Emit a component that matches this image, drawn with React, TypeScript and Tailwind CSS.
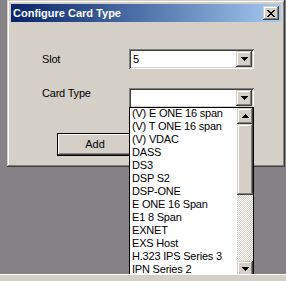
import React from 'react';

const raised =
  'shadow-[inset_-1px_-1px_0_#404040,inset_1px_1px_0_#d4d0c8,inset_-2px_-2px_0_#808080,inset_2px_2px_0_#ffffff]';
const sunken =
  'shadow-[inset_1px_1px_0_#808080,inset_-1px_-1px_0_#ffffff,inset_2px_2px_0_#404040,inset_-2px_-2px_0_#d4d0c8]';

const items = [
  '(V) E ONE 16 span',
  '(V) T ONE 16 span',
  '(V) VDAC',
  'DASS',
  'DS3',
  'DSP S2',
  'DSP-ONE',
  'E ONE 16 Span',
  'E1 8 Span',
  'EXNET',
  'EXS Host',
  'H.323 IPS Series 3',
  'IPN Series 2',
];

const Arrow = ({ up = false }: { up?: boolean }) => (
  <svg width="7" height="4" viewBox="0 0 7 4" shapeRendering="crispEdges">
    <path d={up ? 'M3 0h1v1h1v1h1v1h1v1H0V3h1V2h1V1h1z' : 'M0 0h7v1H6v1H5v1H4v1H3V3H2V2H1V1H0z'} fill="#000" />
  </svg>
);

const ScrollBtn = ({ up = false }: { up?: boolean }) => (
  <div className={`w-[16px] h-[16px] shrink-0 bg-[#d4d0c8] flex items-center justify-center ${raised}`}>
    <Arrow up={up} />
  </div>
);

const Combo = ({ value }: { value?: string }) => (
  <div className={`w-[125px] h-[20px] bg-white flex items-center p-[2px] ${sunken}`}>
    <span className="flex-1 pl-[2px] text-[11px] leading-[13px] text-black">{value}</span>
    <ScrollBtn />
  </div>
);

export default function App() {
  return (
    <div className="w-[286px] h-[281px] bg-[#848284] flex flex-col font-['Liberation_Sans',Arial,sans-serif] select-none">
      <div className="relative h-[274px] overflow-hidden">
        {/* dialog */}
        <div
          className={`ml-[7px] w-[278px] h-[167px] bg-[#d4d0c8] p-[4px] flex flex-col shadow-[inset_-1px_-1px_0_#404040,inset_1px_1px_0_#d4d0c8,inset_-2px_-2px_0_#808080,inset_2px_2px_0_#ffffff]`}
        >
          <div className="h-[18px] flex items-center pl-[2px] pr-[2px] bg-gradient-to-r from-[#0a246a] to-[#a6caf0]">
            <span className="flex-1 text-white font-bold text-[11px] leading-[13px]">Configure Card Type</span>
            <div className={`w-[16px] h-[14px] bg-[#d4d0c8] flex items-center justify-center ${raised}`}>
              <svg width="8" height="7" viewBox="0 0 8 7" shapeRendering="crispEdges">
                <path
                  d="M0 0h2v1h1v1h2V1h1V0h2v1H7v1H6v1H5v1h1v1h1v1h1v1H6V6H5V5H3v1H2v1H0V6h1V5h1V4h1V3H2V2H1V1H0z"
                  fill="#000"
                />
              </svg>
            </div>
          </div>

          <div className="flex items-center mt-[27px] pl-[31px]">
            <span className="w-[87px] text-[11px] leading-[13px] tracking-[-0.2px] text-black">Slot</span>
            <Combo value="5" />
          </div>
          <div className="flex items-center mt-[18px] pl-[31px]">
            <span className="w-[87px] mb-[9px] text-[11px] leading-[13px] tracking-[-0.2px] text-black">Card Type</span>
            <Combo />
          </div>

          <div className="mt-[24px] pl-[46px]">
            <div className="w-[76px] h-[23px] border border-black bg-[#d4d0c8] flex items-center justify-center shadow-[inset_-1px_-1px_0_#404040,inset_1px_1px_0_#ffffff,inset_-2px_-2px_0_#808080]">
              <span className="text-[11px] leading-[13px] text-black">Add</span>
            </div>
          </div>
        </div>

        {/* open dropdown list */}
        <div className="absolute left-[129px] top-[107px] w-[125px] border border-black bg-white flex">
          <div className="flex-1 flex flex-col">
            {items.map((it) => (
              <div
                key={it}
                className="h-[13px] pl-[2px] text-[11px] leading-[11px] tracking-[-0.2px] text-black whitespace-nowrap"
              >
                {it}
              </div>
            ))}
          </div>
          <div className="w-[16px] flex flex-col">
            <ScrollBtn up />
            <div className={`h-[71px] bg-[#d4d0c8] ${raised}`} />
            <div className="flex-1 bg-[image:repeating-conic-gradient(#d4d0c8_0_25%,#ffffff_0_50%)] bg-[length:2px_2px]" />
            <ScrollBtn />
          </div>
        </div>
      </div>
      <div className="h-[7px] bg-[#d4d0c8] shadow-[inset_0_1px_0_#ffffff]" />
    </div>
  );
}
